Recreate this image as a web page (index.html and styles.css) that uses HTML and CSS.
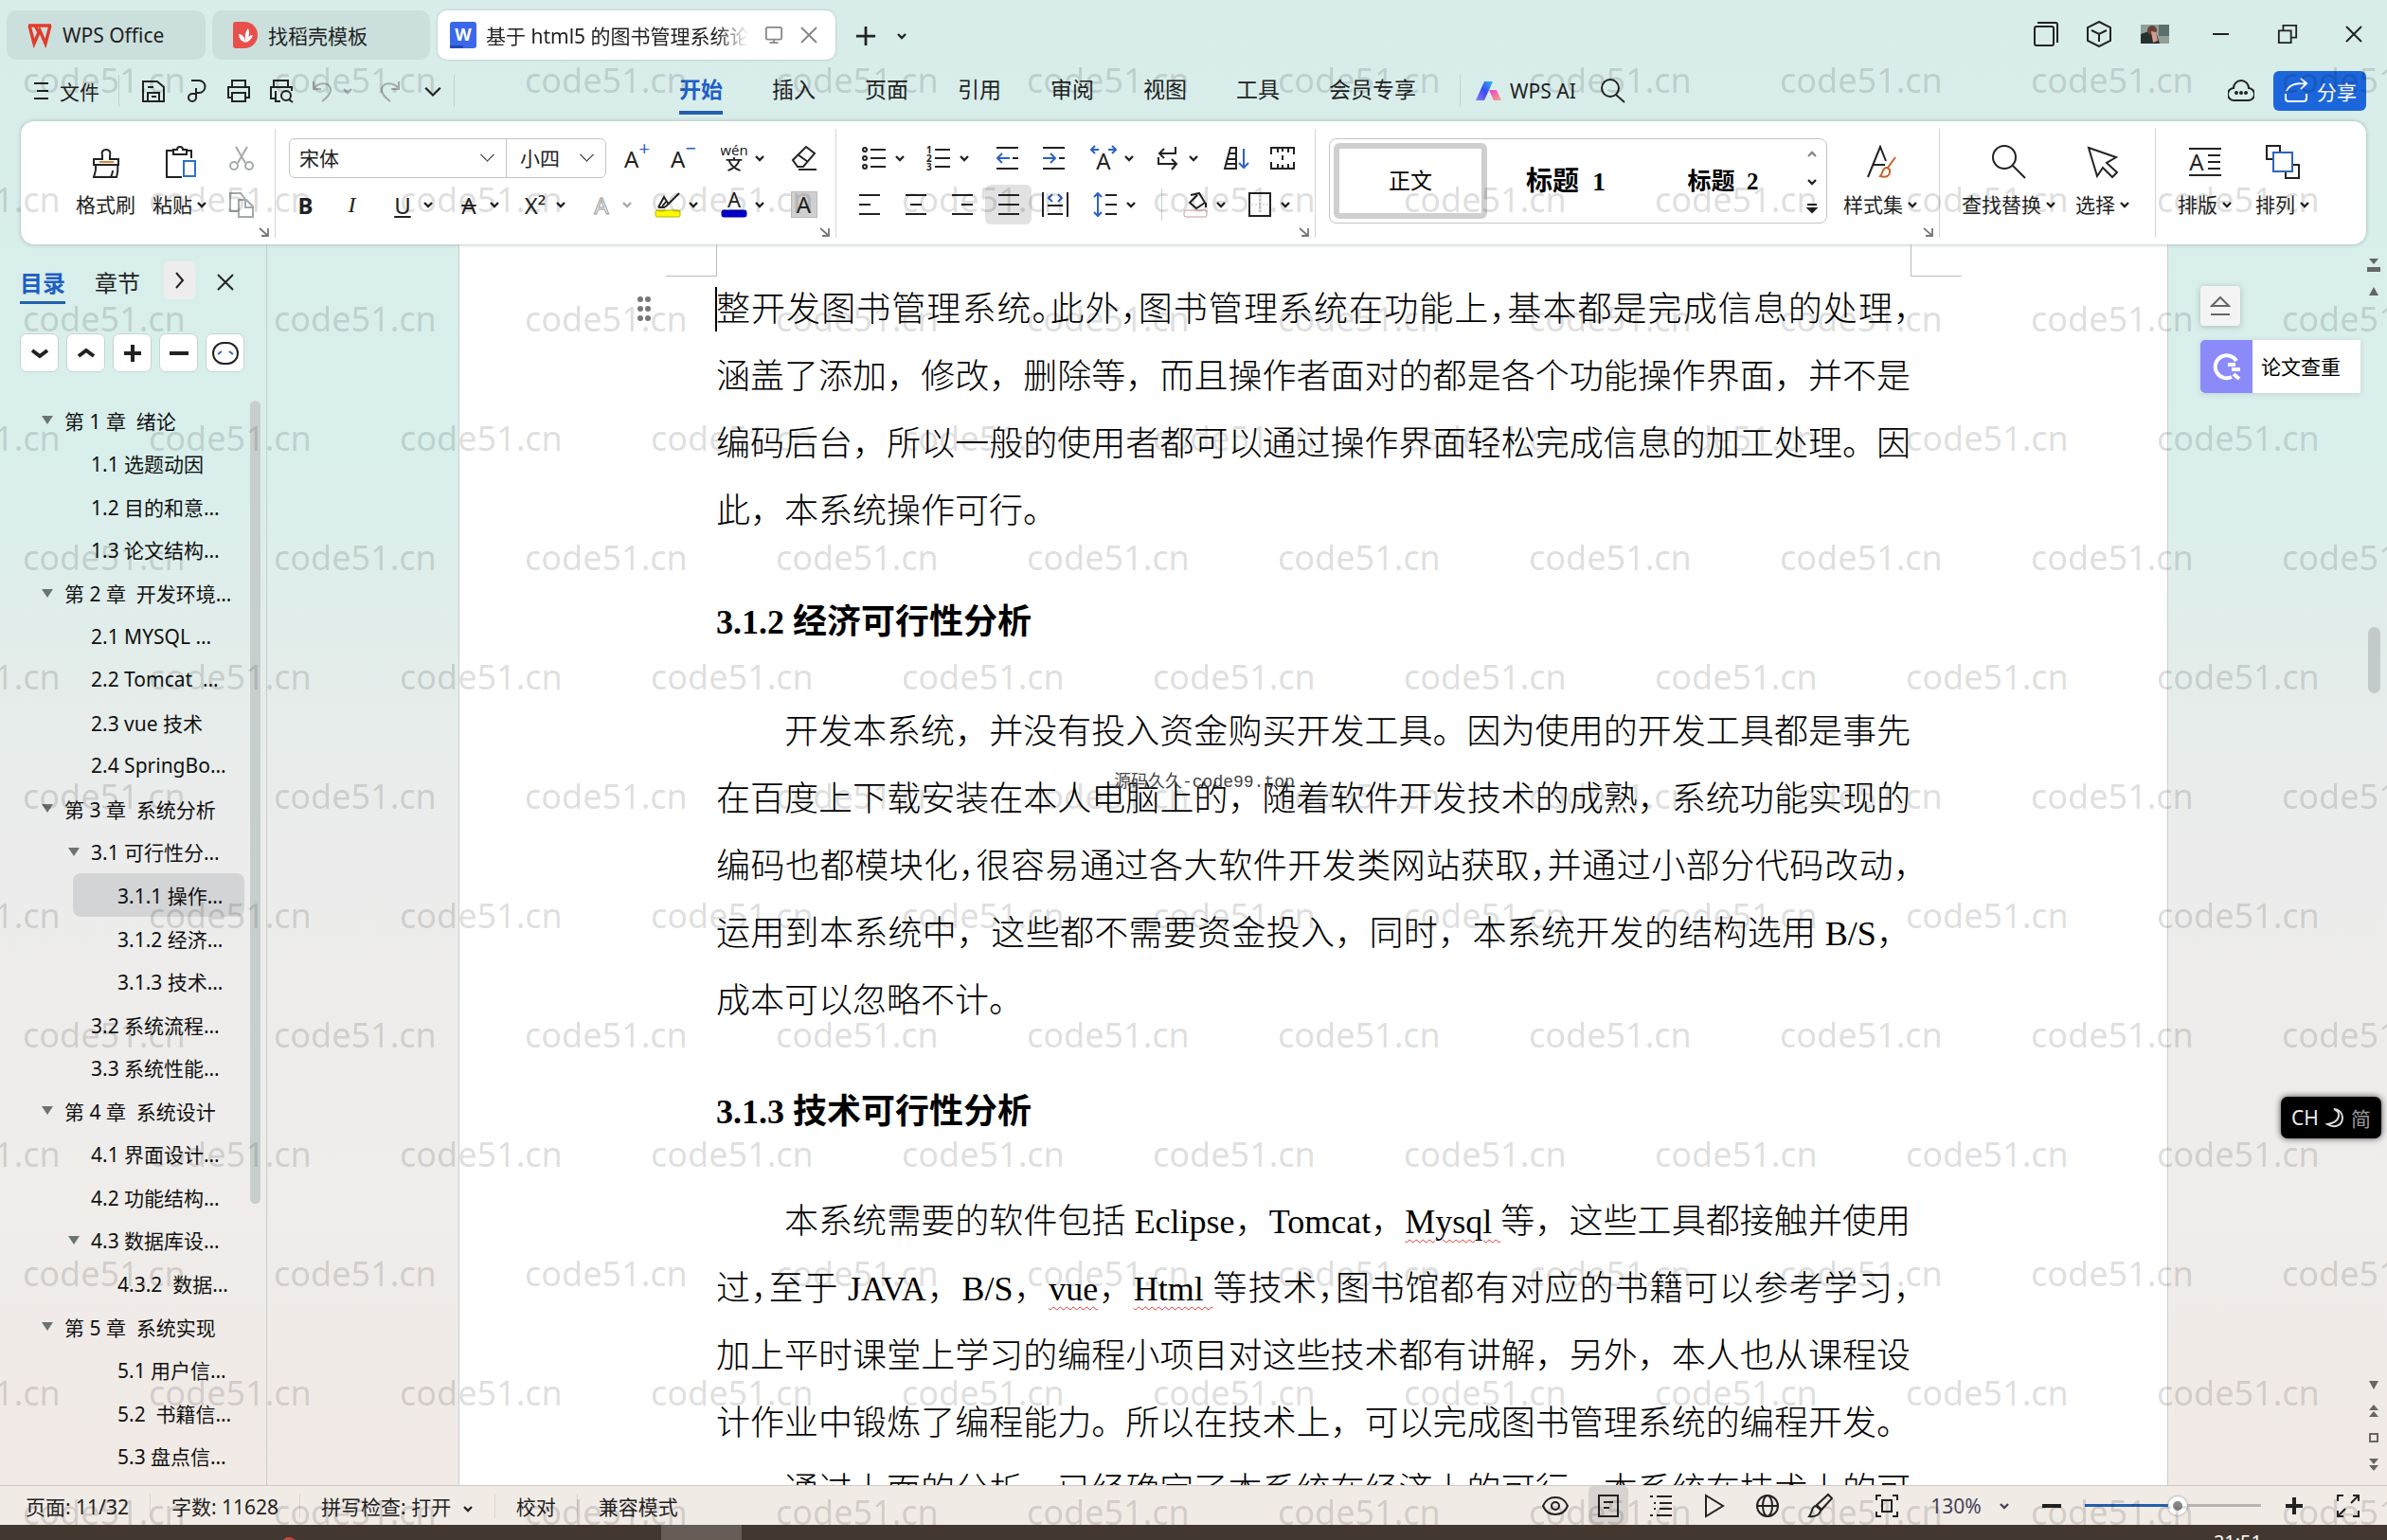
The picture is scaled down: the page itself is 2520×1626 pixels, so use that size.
FILE: index.html
```html
<!DOCTYPE html>
<html lang="zh-CN">
<head>
    <meta charset="utf-8">
    <title>WPS Office</title>
    <link rel="stylesheet" href="styles.css">
</head>
<body>
    <!-- 图标 -->
    <svg class="sprite" aria-hidden="true">
        <symbol id="i-caret" viewBox="0 0 12 12"><path d="M2 4l4 4 4-4" stroke-width="2.4"/></symbol>
        <symbol id="i-down" viewBox="0 0 18 18"><path d="M2 6l7 7 7-7"/></symbol>
        <symbol id="i-x" viewBox="0 0 20 20"><path d="M2 2l16 16M18 2L2 18"/></symbol>
        <symbol id="i-launch" viewBox="0 0 12 12"><path d="M1 2l9 8M10 2v8H3" stroke-width="1.8"/></symbol>
        <symbol id="i-plus" viewBox="0 0 24 24"><path d="M12 1v22M1 12h22"/></symbol>
        <symbol id="i-search" viewBox="0 0 28 28"><circle cx="12" cy="11" r="9"/><path d="M18 18l9 8"/></symbol>
        <symbol id="i-save" viewBox="0 0 28 28"><path d="M3 4h15l7 6v15H3zM8 25v-9h12v9M8 10h6M12 20h5"/></symbol>
        <symbol id="i-out" viewBox="0 0 28 28"><path d="M9 3h8a6 6 0 010 13h-3v5a4 4 0 11-4-4h4M14 16v-5"/></symbol>
        <symbol id="i-print" viewBox="0 0 28 28"><path d="M7 10V3h14v7M7 21H3V10h22v11h-4M7 16h14v9H7z"/></symbol>
        <symbol id="i-preview" viewBox="0 0 28 28"><path d="M6 10V3h15v7M8 22H3V10h22v4M8 14v11h5"/><circle cx="19" cy="19" r="5"/><path d="M22 23l4 3"/></symbol>
        <symbol id="i-undo" viewBox="0 0 28 28"><path d="M5 4v8h8M5 12c5-8 19-8 18 2-1 5-5 8-9 11"/></symbol>
        <symbol id="i-redo" viewBox="0 0 28 28"><path d="M23 4v8h-8M23 12C18 4 4 4 5 14c1 5 5 8 9 11"/></symbol>
        <symbol id="i-brush" viewBox="0 0 36 36"><path d="M14 15V11c-3-8 11-8 8 0v4h9v6H5v-6zM7 21c1 6-1 9-2 13h24c1-4 2-8 1-13M23 34c1-2 2-5 2-7"/><path d="M11 18h15" stroke="#d08a3c"/></symbol>
        <symbol id="i-paste" viewBox="0 0 36 36"><path d="M11 6H4v28h16M25 6h5v8M11 10V5h4c0-4 6-4 6 0h4v5z"/><path d="M22 17h12v16H22z" stroke="#2d6fc4"/></symbol>
        <symbol id="i-cut" viewBox="0 0 28 28"><path d="M8 2l10 17M20 2L10 19"/><circle cx="6" cy="22" r="4"/><circle cx="22" cy="22" r="4"/></symbol>
        <symbol id="i-copy" viewBox="0 0 28 28"><path d="M10 21H2V2h11l4 5v3M11 9h8l7 7v11H11zM18 9v8h8"/></symbol>
        <symbol id="i-eraser" viewBox="0 0 28 28"><path d="M2 16L16 2l9 7-12 14H7zM7 10l11 8M8 26h19"/></symbol>
        <symbol id="i-pinyin" viewBox="0 0 30 30"><text x="15" y="12" font-size="16" text-anchor="middle">wén</text><path d="M6 17h18M15 14v3M9 17c2 6 7 10 13 12M21 17c-2 6-7 10-13 12"/></symbol>
        <symbol id="i-marker" viewBox="0 0 28 28"><path d="M4 17h6l3-2L26 2M4 17l6-11 5 8M12 11l-4 5"/><rect x="1" y="20" width="26" height="7" rx="2" fill="#fdf900" stroke="#b9b600" stroke-width="1"/></symbol>
        <symbol id="i-color" viewBox="0 0 28 28"><text x="14" y="17" font-size="22" text-anchor="middle">A</text><rect x="1" y="20" width="26" height="7" rx="2" fill="#0000c8" stroke="#0000a0" stroke-width="1"/></symbol>
        <symbol id="i-bullets" viewBox="0 0 28 28"><circle cx="4" cy="5" r="2"/><circle cx="4" cy="14" r="2"/><circle cx="4" cy="23" r="2"/><path d="M10 5h16M10 14h16M10 23h16"/></symbol>
        <symbol id="i-numbers" viewBox="0 0 28 28"><text x="1" y="9" font-size="10" font-weight="700">1</text><text x="1" y="18" font-size="10" font-weight="700">2</text><text x="1" y="27" font-size="10" font-weight="700">3</text><path d="M10 5h16M10 14h16M10 23h16"/></symbol>
        <symbol id="i-outdent" viewBox="0 0 28 28"><path d="M3 3h23M3 25h23M20 14h6"/><path d="M17 14H4M9 9l-5 5 5 5" stroke="#2d62c4"/></symbol>
        <symbol id="i-indent" viewBox="0 0 28 28"><path d="M3 3h23M3 25h23M20 14h6"/><path d="M3 14h13M11 9l5 5-5 5" stroke="#2d62c4"/></symbol>
        <symbol id="i-stretch" viewBox="0 0 28 28"><text x="14" y="26" font-size="24" text-anchor="middle">A</text><path d="M9 5H1M5 1L1 5l4 4M19 5h8M23 1l4 4-4 4" stroke="#2d62c4"/></symbol>
        <symbol id="i-wrap" viewBox="0 0 28 28"><path d="M22 2v7H5M10 4L5 9l5 5M4 13v7h19M18 15l5 5-5 6"/></symbol>
        <symbol id="i-sort" viewBox="0 0 28 28"><path d="M2 25L8 3h6v22zM7 9h7M5 15h9M4 20h10"/><path d="M22 4v20M17 19l5 5 5-5" stroke="#2d62c4"/></symbol>
        <symbol id="i-tab" viewBox="0 0 28 28"><path d="M2 10V3h24v7M2 18v7h24v-7M9 3v5M14 3v4M20 3v5M9 25v-5M14 25v-4M20 25v-5M14 11v5"/></symbol>
        <symbol id="i-left" viewBox="0 0 28 28"><path d="M3 4h22M3 14h12M3 24h22"/></symbol>
        <symbol id="i-center" viewBox="0 0 28 28"><path d="M3 4h22M8 14h12M3 24h22"/></symbol>
        <symbol id="i-right" viewBox="0 0 28 28"><path d="M3 4h22M13 14h12M3 24h22"/></symbol>
        <symbol id="i-justify" viewBox="0 0 28 28"><path d="M3 4h22M3 14h22M3 24h22"/></symbol>
        <symbol id="i-spread" viewBox="0 0 28 28"><path d="M1 1v26M27 1v26M6 15h16M6 24h16"/><path d="M11 3L7 7l4 4M17 3l4 4-4 4" stroke="#2d62c4"/></symbol>
        <symbol id="i-spacing" viewBox="0 0 28 28"><path d="M14 4h12M14 14h12M14 24h12"/><path d="M6 2v24M2 6l4-4 4 4M2 22l4 4 4-4" stroke="#2d62c4"/></symbol>
        <symbol id="i-bucket" viewBox="0 0 28 28"><path d="M9 4l9-2 6 10-9 6-7-6 8-8M25 12v5"/><rect x="2" y="20" width="24" height="7" rx="2" stroke="#c99" stroke-width="1"/></symbol>
        <symbol id="i-border" viewBox="0 0 28 28"><path d="M3 2h22v24H3z"/><path d="M14 4v20M5 14h18" stroke="#bbb" stroke-width="1" stroke-dasharray="2 2"/></symbol>
        <symbol id="i-styleset" viewBox="0 0 36 36"><path d="M4 34L17 2l6 15M10 21h12"/><path d="M33 13l-8 11M24 24c-5 0-4 6-7 9 6 2 11 0 10-7z" stroke="#c9612a"/></symbol>
        <symbol id="i-find" viewBox="0 0 36 36"><circle cx="13" cy="13" r="12"/><path d="M22 22l13 13"/></symbol>
        <symbol id="i-pointer" viewBox="0 0 36 36"><path d="M3 3l29 10-10 6 11 10-5 5-10-10-6 9z"/></symbol>
        <symbol id="i-typeset" viewBox="0 0 36 36"><path d="M1 4h34M1 32h34M21 11h13M21 18h13M21 25h13"/><text x="9" y="27" font-size="24" text-anchor="middle">A</text></symbol>
        <symbol id="i-arrange" viewBox="0 0 36 36"><path d="M8 15H1V1h14v7M28 21h7v14H21v-7"/><path d="M8 8h20v20H8z" stroke="#2d62c4"/></symbol>
        <symbol id="i-stack" viewBox="0 0 28 28"><rect x="2" y="6" width="20" height="20" rx="2"/><path d="M5 2h19q2 0 2 2v19"/></symbol>
        <symbol id="i-cube" viewBox="0 0 28 28"><path d="M14 1l12 6v14l-12 6-12-6V7zM6 10l8 4 8-4M14 14v8"/></symbol>
        <symbol id="i-restore" viewBox="0 0 24 24"><path d="M2 8h14v14H2zM7 8V2h15v14h-6"/></symbol>
        <symbol id="i-cloud" viewBox="0 0 28 28"><path d="M7 24a6 6 0 01-1-13 8 8 0 0116 0 6 6 0 01-1 13z"/><g fill="currentColor" stroke="none"><circle cx="9" cy="16" r="2"/><circle cx="14" cy="16" r="2"/><circle cx="19" cy="16" r="2"/></g></symbol>
        <symbol id="i-share" viewBox="0 0 28 28"><path d="M3 17v5q0 3 3 3h16q3 0 3-3v-5M4 14C7 7 14 6 24 6M19 1l6 5-6 6"/></symbol>
        <symbol id="i-screen" viewBox="0 0 22 22"><rect x="2" y="2" width="18" height="14" rx="2"/><path d="M11 16v4M6 20h10"/></symbol>
        <symbol id="i-eye" viewBox="0 0 28 28"><path d="M1 14C6 2 22 2 27 14 22 26 6 26 1 14z"/><circle cx="14" cy="14" r="4"/></symbol>
        <symbol id="i-doc" viewBox="0 0 28 28"><path d="M4 3h20v22H4zM9 10h10M9 16h6"/></symbol>
        <symbol id="i-outline" viewBox="0 0 28 28"><path d="M9 4h16M12 11h13M12 17h13M9 24h16M2 4h3M6 11h2M6 17h2M2 24h3"/></symbol>
        <symbol id="i-play" viewBox="0 0 28 28"><path d="M5 3l18 11L5 25z"/></symbol>
        <symbol id="i-globe" viewBox="0 0 28 28"><circle cx="14" cy="14" r="11"/><ellipse cx="14" cy="14" rx="5" ry="11"/><path d="M3 14h22"/></symbol>
        <symbol id="i-pen" viewBox="0 0 28 28"><path d="M10 13L22 2l4 4-11 12zM9 14c-5 1-3 6-7 11 6 1 12-2 12-7z"/></symbol>
        <symbol id="i-fit" viewBox="0 0 28 28"><path d="M3 8V3h5M20 3h5v5M25 20v5h-5M8 25H3v-5M9 8h10v12H9z"/></symbol>
        <symbol id="i-full" viewBox="0 0 28 28"><path d="M3 9V3h6M19 3h6v6M25 19v6h-6M9 25H3v-6M25 3l-8 8M3 25l8-8"/></symbol>
    </svg>

    <div class="app">
        <header class="titlebar">
            <button class="tab tab-home">
                <svg class="tab-icon" viewBox="0 0 28 28"><path d="M2 4h24M3 4l5 19 6-14 6 14 5-19M9 4l5 9" fill="none" stroke="#e23b2e" stroke-width="3.4"/></svg>
                WPS Office
            </button>
            <button class="tab tab-template">
                <svg class="tab-icon" viewBox="0 0 28 28"><path d="M1 3q0-3 3-3h9a14 14 0 010 28H4q-3 0-3-3z" fill="#e8504c"/><path d="M14 22c-5-2-7-5-7-9 4 0 6 3 7 9zm0 0c-1-6 0-12 3-15 2 5 1 10-3 15zm1 0c2-1 6-4 7-8-4 0-6 3-7 8z" fill="#fff"/></svg>
                找稻壳模板
            </button>
            <button class="tab tab-doc">
                <svg class="tab-icon" viewBox="0 0 28 28"><rect width="28" height="28" rx="3" fill="#3b68e8"/><path d="M0 25h14v3H0z" fill="#2348b4"/><text class="word" x="14" y="20" text-anchor="middle">W</text></svg>
                <span class="tab-title">基于 html5 的图书管理系统论文</span>
                <svg class="ico ico-xs dim"><use href="#i-screen"/></svg>
                <svg class="ico ico-xs dim"><use href="#i-x"/></svg>
            </button>
            <button class="new-tab"><svg class="ico ico-sm bold"><use href="#i-plus"/></svg></button>
            <button class="tab-more"><svg class="caret"><use href="#i-caret"/></svg></button>
            <div class="window-tools">
                <button><svg class="ico"><use href="#i-stack"/></svg></button>
                <button><svg class="ico"><use href="#i-cube"/></svg></button>
                <svg class="avatar" viewBox="0 0 30 20"><rect width="30" height="20" fill="#8f9f97"/><rect x="19" width="11" height="12" fill="#5c6f6d"/><path d="M0 20V10l9-3 8 4 3 9z" fill="#26302f"/><circle cx="12" cy="6" r="5" fill="#6b4038"/><path d="M11 7l5 1 2 9-5 2z" fill="#d79c8b"/></svg>
                <button><svg class="ico ico-xs"><path d="M1 10h17"/></svg></button>
                <button><svg class="ico ico-sm"><use href="#i-restore"/></svg></button>
                <button><svg class="ico ico-xs"><use href="#i-x"/></svg></button>
            </div>
        </header>

        <nav class="menubar">
            <div class="quick">
                <button class="file"><svg class="ico ico-xs"><path d="M2 2h15M5 10h12M2 18h15"/></svg>文件</button>
                <i class="bar"></i>
                <button class="q"><svg class="ico"><use href="#i-save"/></svg></button>
                <button class="q"><svg class="ico"><use href="#i-out"/></svg></button>
                <button class="q"><svg class="ico"><use href="#i-print"/></svg></button>
                <button class="q"><svg class="ico"><use href="#i-preview"/></svg></button>
                <button class="split faint"><svg class="ico"><use href="#i-undo"/></svg><svg class="caret"><use href="#i-caret"/></svg></button>
                <button class="q faint"><svg class="ico"><use href="#i-redo"/></svg></button>
                <button class="q"><svg class="ico ico-xs"><use href="#i-down"/></svg></button>
                <i class="bar"></i>
            </div>
            <div class="menus">
                <a class="active" href="#">开始</a>
                <a href="#">插入</a>
                <a href="#">页面</a>
                <a href="#">引用</a>
                <a href="#">审阅</a>
                <a href="#">视图</a>
                <a href="#">工具</a>
                <a href="#">会员专享</a>
            </div>
            <i class="bar"></i>
            <button class="ai">
                <svg viewBox="0 0 28 22"><defs><linearGradient id="g1" x1="1" y1="0" x2="0" y2="1"><stop offset="0" stop-color="#27b6f5"/><stop offset=".5" stop-color="#3a4cf0"/><stop offset="1" stop-color="#8f7bf5"/></linearGradient><linearGradient id="g2" x1="0" y1="0" x2="1" y2="1"><stop offset="0" stop-color="#e83fd0"/><stop offset="1" stop-color="#ffa27e"/></linearGradient></defs><path d="M0 21L9 1h9L9 21z" fill="url(#g1)"/><path d="M14 10h8l5 11h-8z" fill="url(#g2)"/></svg>
                WPS AI
            </button>
            <button class="find-menu"><svg class="ico"><use href="#i-search"/></svg></button>
            <div class="menu-right">
                <button class="q"><svg class="ico"><use href="#i-cloud"/></svg></button>
                <button class="share"><svg class="ico"><use href="#i-share"/></svg>分享</button>
            </div>
        </nav>

        <section class="ribbon">
            <div class="group g-clip">
                <button class="big"><svg class="ico ico-lg"><use href="#i-brush"/></svg><span>格式刷</span></button>
                <button class="big"><svg class="ico ico-lg"><use href="#i-paste"/></svg><span>粘贴<svg class="caret"><use href="#i-caret"/></svg></span></button>
                <div class="rows">
                    <div class="row"><button class="one faint"><svg class="ico"><use href="#i-cut"/></svg></button></div>
                    <div class="row"><button class="one faint"><svg class="ico"><use href="#i-copy"/></svg></button></div>
                </div>
                <svg class="launch"><use href="#i-launch"/></svg>
            </div>

            <div class="group g-font">
                <div class="rows">
                    <div class="row">
                        <div class="pickers">
                            <select class="font-name" aria-label="字体"><option>宋体</option></select>
                            <select class="font-size" aria-label="字号"><option>小四</option></select>
                        </div>
                        <button class="one letter">A<sup>+</sup></button>
                        <button class="one letter">A<sup>−</sup></button>
                        <button class="split gap"><svg class="ico"><use href="#i-pinyin"/></svg><svg class="caret"><use href="#i-caret"/></svg></button>
                        <button class="one"><svg class="ico"><use href="#i-eraser"/></svg></button>
                    </div>
                    <div class="row">
                        <button class="one letter b">B</button>
                        <button class="one letter it">I</button>
                        <button class="split letter gap"><u>U</u><svg class="caret"><use href="#i-caret"/></svg></button>
                        <button class="split letter"><s>A</s><svg class="caret"><use href="#i-caret"/></svg></button>
                        <button class="split letter"><span>X²</span><svg class="caret"><use href="#i-caret"/></svg></button>
                        <button class="split letter faint"><span class="hollow">A</span><svg class="caret"><use href="#i-caret"/></svg></button>
                        <button class="split"><svg class="ico"><use href="#i-marker"/></svg><svg class="caret"><use href="#i-caret"/></svg></button>
                        <button class="split"><svg class="ico"><use href="#i-color"/></svg><svg class="caret"><use href="#i-caret"/></svg></button>
                        <button class="one letter"><span class="shade">A</span></button>
                    </div>
                </div>
                <svg class="launch"><use href="#i-launch"/></svg>
            </div>

            <div class="group g-para">
                <div class="rows">
                    <div class="row row-lists">
                        <button class="split"><svg class="ico"><use href="#i-bullets"/></svg><svg class="caret"><use href="#i-caret"/></svg></button>
                        <button class="split"><svg class="ico"><use href="#i-numbers"/></svg><svg class="caret"><use href="#i-caret"/></svg></button>
                        <button class="one"><svg class="ico"><use href="#i-outdent"/></svg></button>
                        <button class="one"><svg class="ico"><use href="#i-indent"/></svg></button>
                        <button class="split gap"><svg class="ico"><use href="#i-stretch"/></svg><svg class="caret"><use href="#i-caret"/></svg></button>
                        <button class="split"><svg class="ico"><use href="#i-wrap"/></svg><svg class="caret"><use href="#i-caret"/></svg></button>
                        <button class="one"><svg class="ico"><use href="#i-sort"/></svg></button>
                        <button class="one"><svg class="ico"><use href="#i-tab"/></svg></button>
                    </div>
                    <div class="row">
                        <button class="one"><svg class="ico"><use href="#i-left"/></svg></button>
                        <button class="one"><svg class="ico"><use href="#i-center"/></svg></button>
                        <button class="one"><svg class="ico"><use href="#i-right"/></svg></button>
                        <button class="one on"><svg class="ico"><use href="#i-justify"/></svg></button>
                        <button class="one"><svg class="ico"><use href="#i-spread"/></svg></button>
                        <button class="split gap"><svg class="ico"><use href="#i-spacing"/></svg><svg class="caret"><use href="#i-caret"/></svg></button>
                        <i class="bar"></i>
                        <button class="split"><svg class="ico"><use href="#i-bucket"/></svg><svg class="caret"><use href="#i-caret"/></svg></button>
                        <button class="split"><svg class="ico"><use href="#i-border"/></svg><svg class="caret"><use href="#i-caret"/></svg></button>
                    </div>
                </div>
                <svg class="launch"><use href="#i-launch"/></svg>
            </div>

            <div class="group g-style">
                <div class="gallery">
                    <button class="style current">正文</button>
                    <button class="style h1">标题&nbsp; 1</button>
                    <button class="style h2">标题&nbsp; 2</button>
                    <div class="gallery-nav">
                        <svg class="caret up dim"><use href="#i-caret"/></svg>
                        <svg class="caret"><use href="#i-caret"/></svg>
                        <svg class="caret"><path d="M1 1h10M2 5l4 4 4-4z" fill="currentColor"/></svg>
                    </div>
                </div>
                <button class="big"><svg class="ico ico-lg"><use href="#i-styleset"/></svg><span>样式集<svg class="caret"><use href="#i-caret"/></svg></span></button>
                <svg class="launch"><use href="#i-launch"/></svg>
            </div>

            <div class="group g-edit">
                <button class="big"><svg class="ico ico-lg"><use href="#i-find"/></svg><span>查找替换<svg class="caret"><use href="#i-caret"/></svg></span></button>
                <button class="big"><svg class="ico ico-lg"><use href="#i-pointer"/></svg><span>选择<svg class="caret"><use href="#i-caret"/></svg></span></button>
            </div>

            <div class="group g-layout">
                <button class="big"><svg class="ico ico-lg"><use href="#i-typeset"/></svg><span>排版<svg class="caret"><use href="#i-caret"/></svg></span></button>
                <button class="big"><svg class="ico ico-lg"><use href="#i-arrange"/></svg><span>排列<svg class="caret"><use href="#i-caret"/></svg></span></button>
            </div>
        </section>

        <main class="workspace">
            <aside class="outline">
                <div class="outline-tabs">
                    <a class="active" href="#">目录</a>
                    <a href="#">章节</a>
                    <button class="next"><svg class="ico ico-xs"><path d="M6 2l7 8-7 8"/></svg></button>
                    <button class="close"><svg class="ico ico-xs"><use href="#i-x"/></svg></button>
                </div>
                <div class="outline-tools">
                    <button><svg class="ico ico-xs heavy"><path d="M2 7l8 6 8-6"/></svg></button>
                    <button><svg class="ico ico-xs heavy"><path d="M2 13l8-6 8 6"/></svg></button>
                    <button><svg class="ico ico-xs heavy"><path d="M10 1v18M1 10h18"/></svg></button>
                    <button><svg class="ico ico-xs heavy"><path d="M0 10h20"/></svg></button>
                    <button><svg class="ico"><rect x="1" y="3" width="26" height="22" rx="11"/><path d="M6 15l4-3M22 15l-4-3" stroke="#2d62c4"/></svg></button>
                </div>
                <div class="outline-body">
                    <ul class="tree" id="tree"></ul>
                    <div class="thumb"></div>
                </div>
            </aside>

            <div class="gutter"></div>

            <article class="page">
                <div class="marks"><i class="mark-left"></i><i class="mark-mid"></i><i class="mark-right"></i></div>
                <div class="text">
                    <svg class="handle" viewBox="0 0 16 28"><circle cx="4" cy="4" r="3"/><circle cx="12" cy="4" r="3"/><circle cx="4" cy="14" r="3"/><circle cx="12" cy="14" r="3"/><circle cx="4" cy="24" r="3"/><circle cx="12" cy="24" r="3"/></svg>
                    <i class="cursor"></i>
                    <p>
                        <span class="line tight">整开发图书管理系统。此外，图书管理系统在功能上，基本都是完成信息的处理，</span>
                        <span class="line">涵盖了添加，修改，删除等，而且操作者面对的都是各个功能操作界面，并不是</span>
                        <span class="line">编码后台，所以一般的使用者都可以通过操作界面轻松完成信息的加工处理。因</span>
                        <span class="line last">此，本系统操作可行。</span>
                    </p>
                    <h3>3.1.2 经济可行性分析</h3>
                    <p>
                        <span class="line first">开发本系统，并没有投入资金购买开发工具。因为使用的开发工具都是事先</span>
                        <span class="line">在百度上下载安装在本人电脑上的，随着软件开发技术的成熟，系统功能实现的</span>
                        <span class="line tight">编码也都模块化，很容易通过各大软件开发类网站获取，并通过小部分代码改动，</span>
                        <span class="line">运用到本系统中，这些都不需要资金投入，同时，本系统开发的结构选用 B/S，</span>
                        <span class="line last">成本可以忽略不计。</span>
                    </p>
                    <h3>3.1.3 技术可行性分析</h3>
                    <p>
                        <span class="line first">本系统需要的软件包括 Eclipse，Tomcat，<u class="typo">Mysql </u>等，这些工具都接触并使用</span>
                        <span class="line">过<span class="tight">，</span>至于 JAVA，B/S，<u class="typo">vue</u>，<u class="typo">Html </u>等技术<span class="tight">，</span>图书馆都有对应的书籍可以参考学习<span class="tight">，</span></span>
                        <span class="line">加上平时课堂上学习的编程小项目对这些技术都有讲解，另外，本人也从课程设</span>
                        <span class="line">计作业中锻炼了编程能力。所以在技术上，可以完成图书管理系统的编程开发。</span>
                        <span class="line first">通过上面的分析，已经确定了本系统在经济上的可行，本系统在技术上的可</span>
                    </p>
                </div>
            </article>

            <aside class="side">
                <div class="cards">
                    <button class="eject"><svg class="ico ico-sm"><path d="M11 2l9 9H2zM1 20h20"/></svg></button>
                    <button class="check">
                        <span class="check-icon"><svg viewBox="0 0 30 30"><path d="M25 9A12 12 0 1020 26M16 13h8M20 18h9M22 23l6 5" fill="none" stroke="#fff" stroke-width="4"/></svg></span>
                        <span class="check-text">论文查重</span>
                    </button>
                </div>
                <div class="scroll">
                    <svg viewBox="0 0 16 16"><path d="M3 1h10L8 7zM1 10h14v5H1z"/></svg>
                    <svg viewBox="0 0 16 16"><path d="M8 3l5 9H3z"/></svg>
                    <i class="scroll-thumb"></i>
                    <i class="grow"></i>
                    <svg viewBox="0 0 16 16"><path d="M8 13L3 4h10z"/></svg>
                    <svg viewBox="0 0 16 16"><path d="M8 1l5 6H3zM8 8l5 6H3z"/></svg>
                    <svg viewBox="0 0 16 16"><path d="M4 4h8v8H4z" fill="none" stroke="#666" stroke-width="2"/></svg>
                    <svg viewBox="0 0 16 16"><path d="M8 8L3 2h10zM8 15L3 9h10z"/></svg>
                </div>
            </aside>
        </main>

        <footer class="status">
            <span>页面: 11/32</span><i class="bar"></i>
            <span>字数: 11628</span><i class="bar"></i>
            <span>拼写检查: 打开 <svg class="caret"><use href="#i-caret"/></svg></span><i class="bar"></i>
            <span>校对</span><i class="bar"></i>
            <span>兼容模式</span>
            <div class="views">
                <button><svg class="ico"><use href="#i-eye"/></svg></button>
                <button class="on"><svg class="ico"><use href="#i-doc"/></svg></button>
                <button><svg class="ico"><use href="#i-outline"/></svg></button>
                <button><svg class="ico"><use href="#i-play"/></svg></button>
                <button><svg class="ico"><use href="#i-globe"/></svg></button>
                <button><svg class="ico"><use href="#i-pen"/></svg></button>
                <button class="fit"><svg class="ico"><use href="#i-fit"/></svg></button>
                <button class="percent">130%<svg class="caret"><use href="#i-caret"/></svg></button>
                <button class="zoom-btn"><svg class="ico ico-xs heavy"><path d="M0 10h20"/></svg></button>
                <input type="range" min="0" max="100" value="53" aria-label="缩放">
                <button class="zoom-btn"><svg class="ico ico-xs heavy"><path d="M10 1v18M1 10h18"/></svg></button>
                <button class="full"><svg class="ico"><use href="#i-full"/></svg></button>
            </div>
        </footer>

        <div class="watermark" id="watermark"></div>
        <div class="site-mark">源码久久-code99.top</div>
        <div class="ime">CH <svg viewBox="0 0 20 22"><path d="M9 2c8 3 7 14-7 16 8 5 16 1 16-7 0-5-4-9-9-9z"/></svg> <b>简</b></div>
    </div>

    <div class="taskbar">
        <i class="task-dot"></i>
        <i class="task-active"></i>
        <span class="clock">21:51</span>
    </div>

    <script>
        // 目录数据: [级别, 标题, 是否可展开]
        var outline = [
            [1, "第 1 章&nbsp; 绪论", true],
            [2, "1.1 选题动因"],
            [2, "1.2 目的和意…"],
            [2, "1.3 论文结构…"],
            [1, "第 2 章&nbsp; 开发环境…", true],
            [2, "2.1 MYSQL …"],
            [2, "2.2 Tomcat &nbsp;…"],
            [2, "2.3 vue 技术"],
            [2, "2.4 SpringBo…"],
            [1, "第 3 章&nbsp; 系统分析", true],
            [2, "3.1 可行性分…", true],
            [3, "3.1.1 操作…"],
            [3, "3.1.2 经济…"],
            [3, "3.1.3 技术…"],
            [2, "3.2 系统流程…"],
            [2, "3.3 系统性能…"],
            [1, "第 4 章&nbsp; 系统设计", true],
            [2, "4.1 界面设计…"],
            [2, "4.2 功能结构…"],
            [2, "4.3 数据库设…", true],
            [3, "4.3.2&nbsp; 数据…"],
            [1, "第 5 章&nbsp; 系统实现", true],
            [3, "5.1 用户信…"],
            [3, "5.2&nbsp; 书籍信…"],
            [3, "5.3 盘点信…"]
        ];
        var current = 11;

        function showOutline() {
            var tree = document.getElementById('tree');
            for (var i = 0; i < outline.length; i++) {
                var item = document.createElement('li');
                item.className = 'level' + outline[i][0] + (i == current ? ' selected' : '');
                item.innerHTML = '<i class="arrow' + (outline[i][2] ? ' open' : '') + '"></i><a href="#">' + outline[i][1] + '</a>';
                tree.appendChild(item);
            }
        }

        function showWatermark() {
            var box = document.getElementById('watermark');
            for (var r = 0; r < 13; r++) {
                var row = document.createElement('div');
                row.className = r % 2 ? 'mark-row odd' : 'mark-row';
                for (var c = 0; c < 10; c++) {
                    row.innerHTML += '<span>code51.cn</span>';
                }
                box.appendChild(row);
            }
        }

        showOutline();
        showWatermark();
    </script>
</body>
</html>
```

FILE: styles.css
```css
* {
    box-sizing: border-box;
}

body {
    margin: 0;
    height: 100vh;
    display: flex;
    flex-direction: column;
    overflow: hidden;
    font-family: "Noto Sans", "Noto Sans CJK SC", sans-serif;
    font-size: 21px;
    color: #222;
}

button {
    padding: 0;
    border: none;
    background: none;
    font: inherit;
    color: inherit;
    display: flex;
    align-items: center;
    justify-content: center;
    white-space: nowrap;
}

a {
    color: inherit;
    text-decoration: none;
}

.sprite {
    display: none;
}

svg text {
    fill: currentColor;
    stroke: none;
}

svg {
    flex: none;
}

.ico {
    width: 28px;
    height: 28px;
    fill: none;
    stroke: currentColor;
    stroke-width: 2;
}

.ico-xs { width: 20px; height: 20px; }
.ico-sm { width: 22px; height: 22px; }
.ico-lg { width: 36px; height: 36px; }
.ico.heavy { stroke-width: 4; }
.ico.bold { stroke-width: 3; }

.caret {
    width: 12px;
    height: 12px;
    fill: none;
    stroke: currentColor;
    stroke-width: 2;
}

.caret.up { transform: rotate(180deg); }
.dim { color: #888; }
.faint { color: #a3a9a8; }

.bar {
    width: 1px;
    height: 34px;
    background: #c3cfcd;
}

.app {
    flex: 1;
    min-height: 0;
    position: relative;
    overflow: hidden;
    display: flex;
    flex-direction: column;
    background: linear-gradient(#d8edea 0%, #d8efec 30%, #e2edea 42%, #ececec 55%, #efedeb 75%, #f1e9e4 100%);
}

/* 标题栏 */
.titlebar {
    height: 64px;
    padding: 11px 0 0 7px;
    display: flex;
}

.tab {
    height: 52px;
    border-radius: 10px;
    background: #cbe0dd;
    justify-content: flex-start;
    padding: 0 21px;
    gap: 10px;
}

.tab-home { width: 210px; }
.tab-template { width: 230px; margin-left: 7px; }

.tab-doc {
    width: 420px;
    margin-left: 8px;
    padding: 0 18px 0 13px;
    background: #fff;
    box-shadow: 0 0 3px #a9bcb9;
}

.tab-doc .ico { margin-left: 7px; }

.tab-icon {
    width: 28px;
    height: 28px;
}

.tab-icon .word {
    fill: #fff;
    font-size: 18px;
    font-weight: 700;
}

.tab-title {
    flex: 1;
    overflow: hidden;
    text-align: left;
    -webkit-mask-image: linear-gradient(90deg, #000 88%, transparent);
    mask-image: linear-gradient(90deg, #000 88%, transparent);
}

.new-tab { width: 64px; }
.tab-more { width: 12px; }

.window-tools {
    margin-left: auto;
    height: 50px;
    display: flex;
    align-items: center;
}

.window-tools button { width: 70px; }
.window-tools button:nth-child(-n+2) { width: 56px; }

.avatar {
    width: 30px;
    height: 20px;
    margin: 0 20px 0 16px;
}

/* 菜单栏 */
.menubar {
    height: 64px;
    padding: 0 22px 0 34px;
    display: flex;
    align-items: center;
}

.quick {
    width: 683px;
    display: flex;
    align-items: center;
}

.file {
    gap: 9px;
    margin-right: 20px;
}

.quick .bar { margin-right: 13px; }
.q { width: 45px; }

.split {
    width: 70px;
    padding-left: 7px;
    gap: 7px;
    height: 42px;
    justify-content: flex-start;
}

.menus {
    display: flex;
    gap: 52px;
    font-size: 23px;
    line-height: 46px;
}

.menus a {
    height: 50px;
    border-bottom: 4px solid transparent;
}

.menus .active {
    color: #1f5fc4;
    font-weight: 700;
    border-color: #235fae;
}

.menubar > .bar { margin: 0 16px 0 46px; }

.ai { gap: 8px; }

.ai svg {
    width: 28px;
    height: 22px;
}

.find-menu { margin-left: 24px; }

.menu-right {
    margin-left: auto;
    display: flex;
    gap: 12px;
}

.share {
    width: 98px;
    height: 42px;
    border-radius: 6px;
    background: #1c66dc;
    color: #fff;
    gap: 8px;
}

/* 功能区 */
.ribbon {
    height: 130px;
    margin: 0 22px;
    padding: 8px 0 7px;
    display: flex;
    border-radius: 14px;
    background: #fff;
    box-shadow: 0 0 4px #9fb3b0;
    position: relative;
    z-index: 1;
}

.group {
    position: relative;
    padding-top: 10px;
    display: flex;
    align-items: flex-start;
    border-right: 1px solid #d6d6d6;
}

.g-clip { width: 269px; padding-left: 58px; gap: 18px; }
.g-font { width: 592px; padding-left: 7px; }
.g-para { width: 506px; padding-left: 10px; }
.g-style { flex: 1; padding: 10px 22px 0 14px; gap: 17px; }
.g-edit { width: 228px; padding-left: 23px; gap: 20px; }
.g-layout { width: 222px; padding-left: 23px; gap: 24px; border: none; }

.rows {
    display: flex;
    flex-direction: column;
    gap: 7px;
}

.row {
    height: 42px;
    display: flex;
    align-items: center;
}

.row .bar { margin: 0 14px 0 12px; }
.row-lists { padding-left: 9px; }

.one {
    width: 49px;
    height: 42px;
    border-radius: 6px;
}

.g-clip .one { width: 36px; }
.g-para .split { width: 68px; }
.gap { margin-left: 8px; }
.one.on { background: #e2e2e2; }

.letter { font-size: 24px; }
.letter > :first-child:not(sup) { min-width: 28px; text-align: center; }
.letter sup { color: #2d62c4; font-size: 20px; align-self: flex-start; line-height: 22px; }
.b { font-weight: 700; }
.it { font-style: italic; font-family: "Liberation Serif", serif; }

.hollow {
    color: #fff;
    -webkit-text-stroke: 1px #999;
}

.shade {
    background: #cfcfcf;
    border: 1px solid #bbb;
    line-height: 26px;
}

.big {
    margin-top: 7px;
    flex-direction: column;
    gap: 13px;
    line-height: 28px;
}

.big span {
    display: flex;
    align-items: center;
    gap: 4px;
}

.launch {
    position: absolute;
    right: 5px;
    bottom: 0;
    width: 12px;
    height: 12px;
    fill: none;
    stroke: #777;
}

.pickers {
    display: flex;
    margin: 0 8px 0 7px;
    border: 1px solid #c4c4c4;
    border-radius: 6px;
}

.pickers select {
    height: 40px;
    padding: 0 10px;
    border: none;
    appearance: none;
    font: inherit;
    color: inherit;
    background: linear-gradient(45deg, transparent 48%, #666 48%, #666 60%, transparent 60%) right 19px center / 8px 8px no-repeat,
        linear-gradient(-45deg, transparent 48%, #666 48%, #666 60%, transparent 60%) right 12px center / 8px 8px no-repeat;
}

.font-name { width: 228px; }
.pickers .font-size { width: 105px; padding-left: 14px; border-left: 1px solid #c4c4c4; }

.gallery {
    flex: 1;
    height: 90px;
    padding: 4px;
    display: flex;
    border: 1px solid #c4c4c4;
    border-radius: 8px;
}

.style {
    flex: 1;
    height: 80px;
    padding-bottom: 4px;
    border-radius: 6px;
    color: #000;
    font-family: "Liberation Serif", "Noto Sans CJK SC", serif;
}

.current { flex: 0 0 162px; border: 6px solid #cfcfcf; font-size: 23px; }
.h1 { font-size: 28px; font-weight: 700; }
.h2 { font-size: 25px; font-weight: 700; }

.gallery-nav {
    width: 22px;
    display: flex;
    flex-direction: column;
    align-items: center;
    justify-content: space-between;
    padding: 6px 0 4px;
}

/* 工作区 */
.workspace {
    flex: 1;
    min-height: 0;
    display: grid;
    grid-template-columns: 282px 202px 1fr 231px;
}

.workspace > * { min-height: 0; }

.outline {
    display: flex;
    flex-direction: column;
    border-right: 1px solid #c4cfcd;
    padding: 18px 0 8px;
}

.outline-tabs {
    height: 46px;
    padding-left: 21px;
    display: flex;
    font-size: 24px;
    line-height: 46px;
}

.outline-tabs a {
    height: 45px;
    margin-right: 31px;
}

.outline-tabs .active {
    color: #1f5fc4;
    font-weight: 700;
    border-bottom: 3px solid #235fae;
}

.next {
    width: 33px;
    height: 40px;
    margin-left: -6px;
    border-radius: 5px;
    background: #eeeced;
}

.close {
    width: 20px;
    height: 44px;
    margin-left: 22px;
}

.outline-tools {
    padding: 30px 0 0 21px;
    display: flex;
    gap: 8px;
}

.outline-tools button {
    width: 41px;
    height: 41px;
    border: 1px solid #c9d2d1;
    border-radius: 7px;
    background: #fff;
}

.outline-body {
    flex: 1;
    min-height: 0;
    margin-top: 28px;
    display: flex;
}

.tree {
    width: 258px;
    margin: 0;
    padding: 0;
    list-style: none;
    display: flex;
    flex-direction: column;
    color: #111;
}

.tree li {
    flex: 1;
    min-height: 0;
    display: flex;
    align-items: center;
    white-space: nowrap;
    border-radius: 8px;
}

.tree .level1 { padding-left: 42px; }
.tree .level2 { padding-left: 70px; }
.tree .level3 { padding-left: 98px; }

.tree .selected {
    margin-left: 77px;
    padding-left: 21px;
    background: #d3d4d5;
}

.arrow { width: 26px; }

.arrow.open::before {
    content: "";
    display: block;
    width: 0;
    margin-left: 2px;
    border: 6px solid transparent;
    border-top: 9px solid #6b7473;
    border-bottom: none;
}

.thumb {
    width: 11px;
    height: 848px;
    margin: 2px 0 0 6px;
    border-radius: 6px;
    background: #c7cfce;
}

/* 文档页 */
.page {
    background: #fff;
    border: solid #c9cfce;
    border-width: 0 1px;
    overflow: hidden;
}

.marks {
    height: 34px;
    display: flex;
    justify-content: center;
}

.mark-left, .mark-right {
    width: 54px;
    border-bottom: 1px solid #bbb;
}

.mark-left { border-right: 1px solid #bbb; }
.mark-right { border-left: 1px solid #bbb; }
.mark-mid { width: 1260px; }

.text {
    position: relative;
    width: 1261px;
    margin: 0 auto;
    font-family: "Liberation Serif", "Noto Sans CJK SC", serif;
    font-size: 36px;
    font-weight: 300;
    line-height: 71px;
    color: #000;
}

.text p { margin: 0; }

.line {
    display: block;
    text-align: justify;
    text-align-last: justify;
}

.line.first { padding-left: 72px; }
.line.last { text-align-last: left; }
.tight { font-feature-settings: "halt"; }

.text h3 {
    margin: 0;
    font-size: 36px;
    line-height: 162px;
}

.typo {
    text-decoration: underline wavy #d33 1px;
    text-underline-offset: 6px;
}

.handle {
    position: absolute;
    left: -84px;
    top: 20px;
    width: 16px;
    height: 28px;
    fill: #777;
}

.cursor {
    position: absolute;
    left: -1px;
    top: 11px;
    width: 2px;
    height: 47px;
    background: #000;
}

/* 右侧 */
.side {
    display: flex;
    justify-content: space-between;
    padding-left: 34px;
}

.cards { padding-top: 44px; }

.eject {
    width: 42px;
    height: 42px;
    border-radius: 4px;
    background: #f4f4f5;
    color: #666;
    box-shadow: 0 1px 6px #a9bcb9;
}

.check {
    margin-top: 15px;
    height: 56px;
    box-shadow: 0 1px 5px #c3d0ce;
}

.check-icon {
    width: 55px;
    height: 56px;
    display: flex;
    align-items: center;
    justify-content: center;
    border-radius: 5px 0 0 5px;
    background: #8a8bf8;
}

.check-icon svg { width: 30px; height: 30px; }

.check-text {
    width: 114px;
    padding-left: 9px;
    line-height: 56px;
    text-align: left;
    background: #fff;
    color: #000;
}

.scroll {
    width: 28px;
    padding: 14px 0;
    display: flex;
    flex-direction: column;
    align-items: center;
    gap: 12px;
}

.scroll svg {
    width: 16px;
    height: 16px;
    fill: #666;
}

.scroll-thumb {
    width: 13px;
    height: 70px;
    margin-top: 334px;
    border-radius: 7px;
    background: #c3cbca;
}

.grow { flex: 1; }

/* 状态栏 */
.status {
    height: 42px;
    padding: 0 27px;
    display: flex;
    align-items: center;
    border-top: 1px solid #cfcac6;
    background: #f1ebe6;
}

.status .bar {
    margin: 0 22px;
    height: 26px;
    background: #dcd5d0;
}

.status .caret { margin-left: 6px; }

.views {
    margin-left: auto;
    display: flex;
    align-items: center;
}

.views button { width: 56px; height: 41px; }
.views .on { width: 42px; margin: 0 7px; background: #d8d3cf; border-radius: 5px; }
.views .fit { width: 84px; }
.views .percent { width: 92px; color: #445; gap: 12px; }
.views .zoom-btn { width: 56px; }
.views .percent + .zoom-btn { margin-left: 12px; }
.views .full { width: 28px; margin-left: 15px; }

.views input {
    appearance: none;
    width: 186px;
    height: 22px;
    margin: 0 7px;
    background: linear-gradient(90deg, #235fae 53%, #b8b4b1 53%) center / 100% 3px no-repeat;
}

.views input::-webkit-slider-thumb {
    appearance: none;
    width: 20px;
    height: 20px;
    border: 5px solid #fff;
    border-radius: 50%;
    background: #888;
    box-shadow: 0 0 3px #888;
}

/* 浮层 */
.watermark {
    position: absolute;
    inset: 22px 0 0;
    z-index: 2;
    overflow: hidden;
    pointer-events: none;
    font-size: 36px;
    line-height: 126px;
    color: rgba(0, 0, 0, 0.15);
}

.mark-row {
    display: flex;
    padding-left: 24px;
}

.mark-row.odd {
    padding-left: 0;
    margin-left: -108px;
}

.mark-row span { flex: 0 0 265px; }

.site-mark {
    position: absolute;
    left: calc(50% - 84px);
    top: 810px;
    z-index: 2;
    font: 18px "Liberation Mono", "Noto Sans CJK SC", monospace;
    color: #444;
}

.ime {
    position: absolute;
    right: 6px;
    top: 1158px;
    z-index: 3;
    width: 106px;
    height: 44px;
    display: flex;
    align-items: center;
    justify-content: center;
    gap: 7px;
    border-radius: 7px;
    background: #000;
    color: #eee;
    box-shadow: 0 0 7px #444;
}

.ime svg { width: 20px; height: 22px; fill: none; stroke: #ddd; stroke-width: 2; }
.ime b { font-weight: 400; color: #999; }

.taskbar {
    height: 16px;
    overflow: hidden;
    display: flex;
    background: #43382f;
    color: #fff;
}

.task-dot {
    width: 16px;
    height: 16px;
    margin: 13px 0 0 297px;
    border-radius: 50%;
    background: #c8443c;
}

.task-active {
    width: 85px;
    margin-left: 385px;
    background: #675d57;
}

.clock {
    margin: 4px 132px 0 auto;
    line-height: 28px;
    font-size: 20px;
}
```
